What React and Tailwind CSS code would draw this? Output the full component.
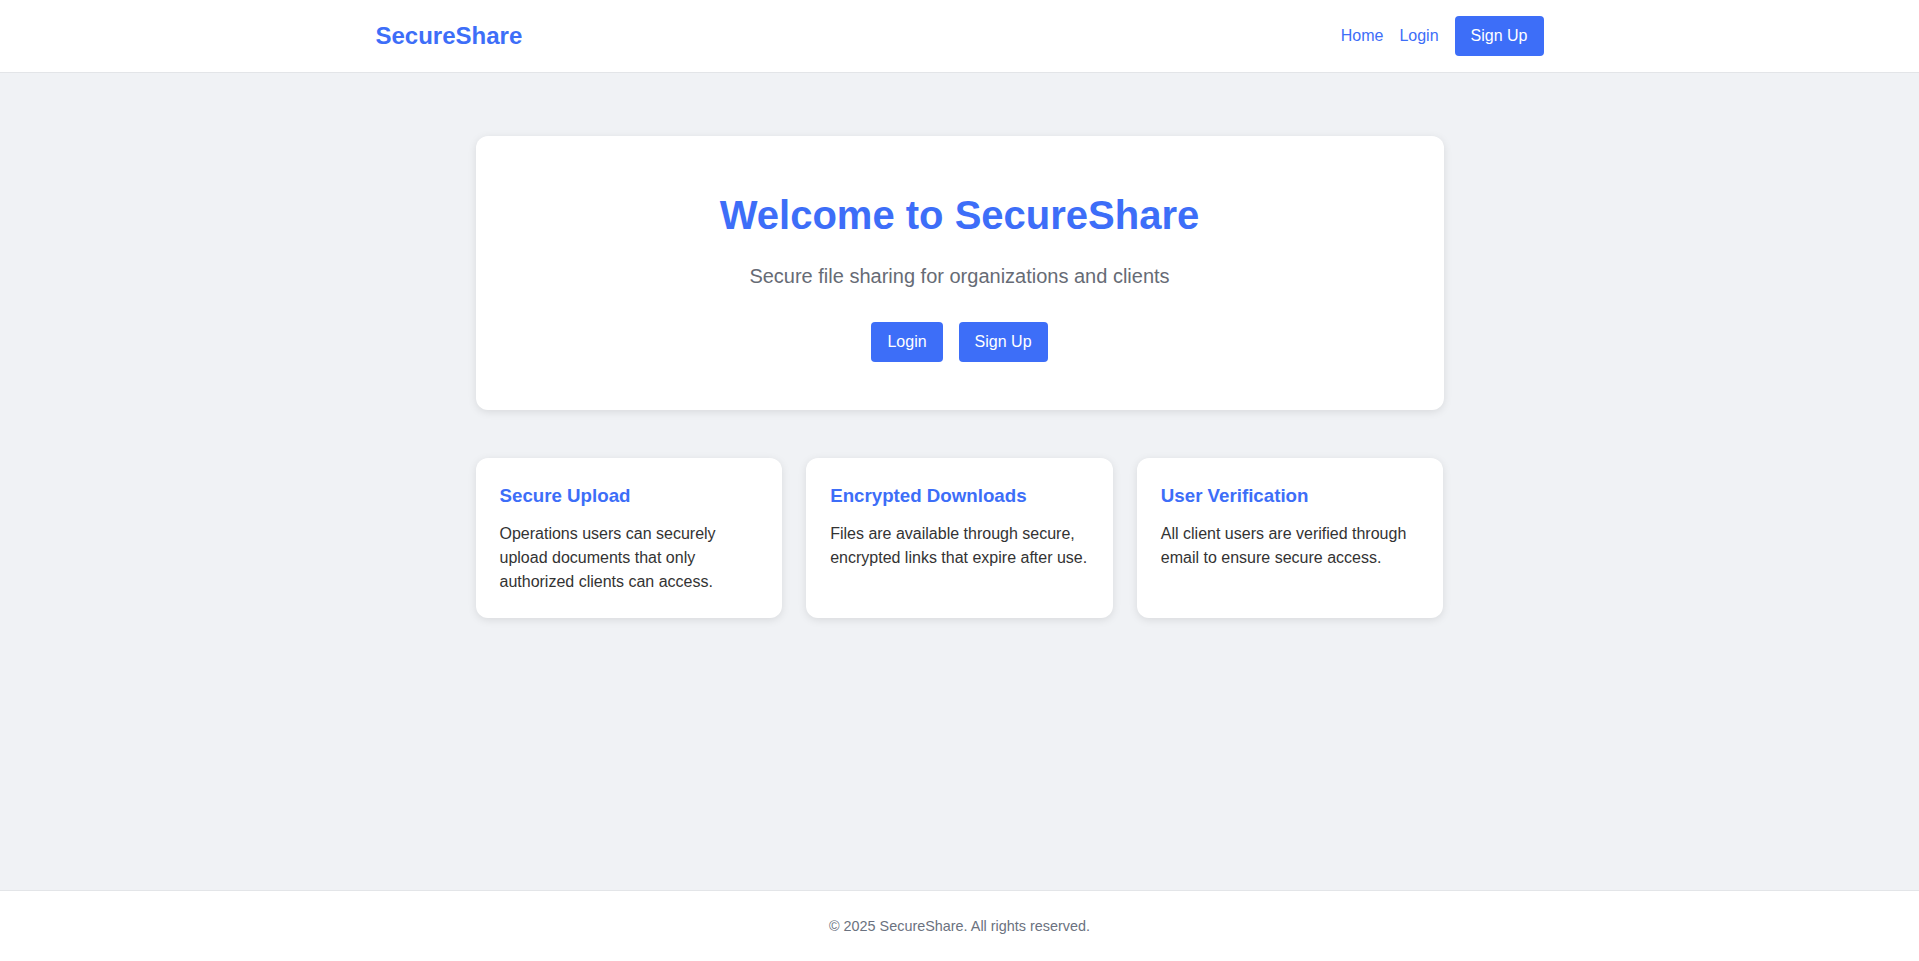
import React from "react";

const features = [
  {
    title: "Secure Upload",
    text: "Operations users can securely upload documents that only authorized clients can access.",
  },
  {
    title: "Encrypted Downloads",
    text: "Files are available through secure, encrypted links that expire after use.",
  },
  {
    title: "User Verification",
    text: "All client users are verified through email to ensure secure access.",
  },
];

const App = () => {
  return (
    <div
      className="min-h-screen flex flex-col bg-[#f0f2f5] text-[#333]"
      style={{ fontFamily: '"Liberation Sans", Arial, sans-serif' }}
    >
      {/* HEADER */}
      <header className="bg-white border-b border-[#e3e5e8]">
        <div className="max-w-[1200px] mx-auto px-4 py-4 flex items-center justify-between">
          <a href="#" className="text-[24px] font-bold text-[#3d6ef8] leading-[28px]">
            SecureShare
          </a>
          <nav className="flex items-center gap-4 text-[16px]">
            <a href="#" className="text-[#3d6ef8]">Home</a>
            <a href="#" className="text-[#3d6ef8]">Login</a>
            <a
              href="#"
              className="bg-[#3d6ef8] text-white px-4 py-2 rounded leading-[24px]"
            >
              Sign Up
            </a>
          </nav>
        </div>
      </header>

      {/* MAIN */}
      <main className="flex-1 pt-[63px]">
        <div className="max-w-[1000px] mx-auto px-4">
          {/* HERO */}
          <section className="bg-white rounded-xl shadow-[0_2px_8px_rgba(0,0,0,0.1)] text-center pt-[55px] pb-12 px-6">
            <h1 className="text-[40px] font-bold text-[#3d6ef8] leading-[48px]">
              Welcome to SecureShare
            </h1>
            <p className="mt-[23px] text-[20px] leading-[28px] text-[#666b75]">
              Secure file sharing for organizations and clients
            </p>
            <div className="mt-8 flex justify-center gap-4">
              <a
                href="#"
                className="bg-[#3d6ef8] text-white px-4 py-2 rounded leading-[24px] text-[16px]"
              >
                Login
              </a>
              <a
                href="#"
                className="bg-[#3d6ef8] text-white px-4 py-2 rounded leading-[24px] text-[16px]"
              >
                Sign Up
              </a>
            </div>
          </section>

          {/* FEATURES */}
          <section className="mt-12 grid grid-cols-3 gap-6">
            {features.map((f) => (
              <div
                key={f.title}
                className="bg-white rounded-xl shadow-[0_2px_8px_rgba(0,0,0,0.1)] p-6"
              >
                <h3 className="text-[18.72px] font-bold text-[#3d6ef8] leading-[28px]">
                  {f.title}
                </h3>
                <p className="mt-3 text-[16px] leading-[24px] text-[#333]">
                  {f.text}
                </p>
              </div>
            ))}
          </section>
        </div>
      </main>

      {/* FOOTER */}
      <footer className="bg-white border-t border-[#e3e5e8] py-6 text-center">
        <p className="text-[14.4px] leading-[22px] text-[#6b7280]">
          © 2025 SecureShare. All rights reserved.
        </p>
      </footer>
    </div>
  );
};

export default App;
